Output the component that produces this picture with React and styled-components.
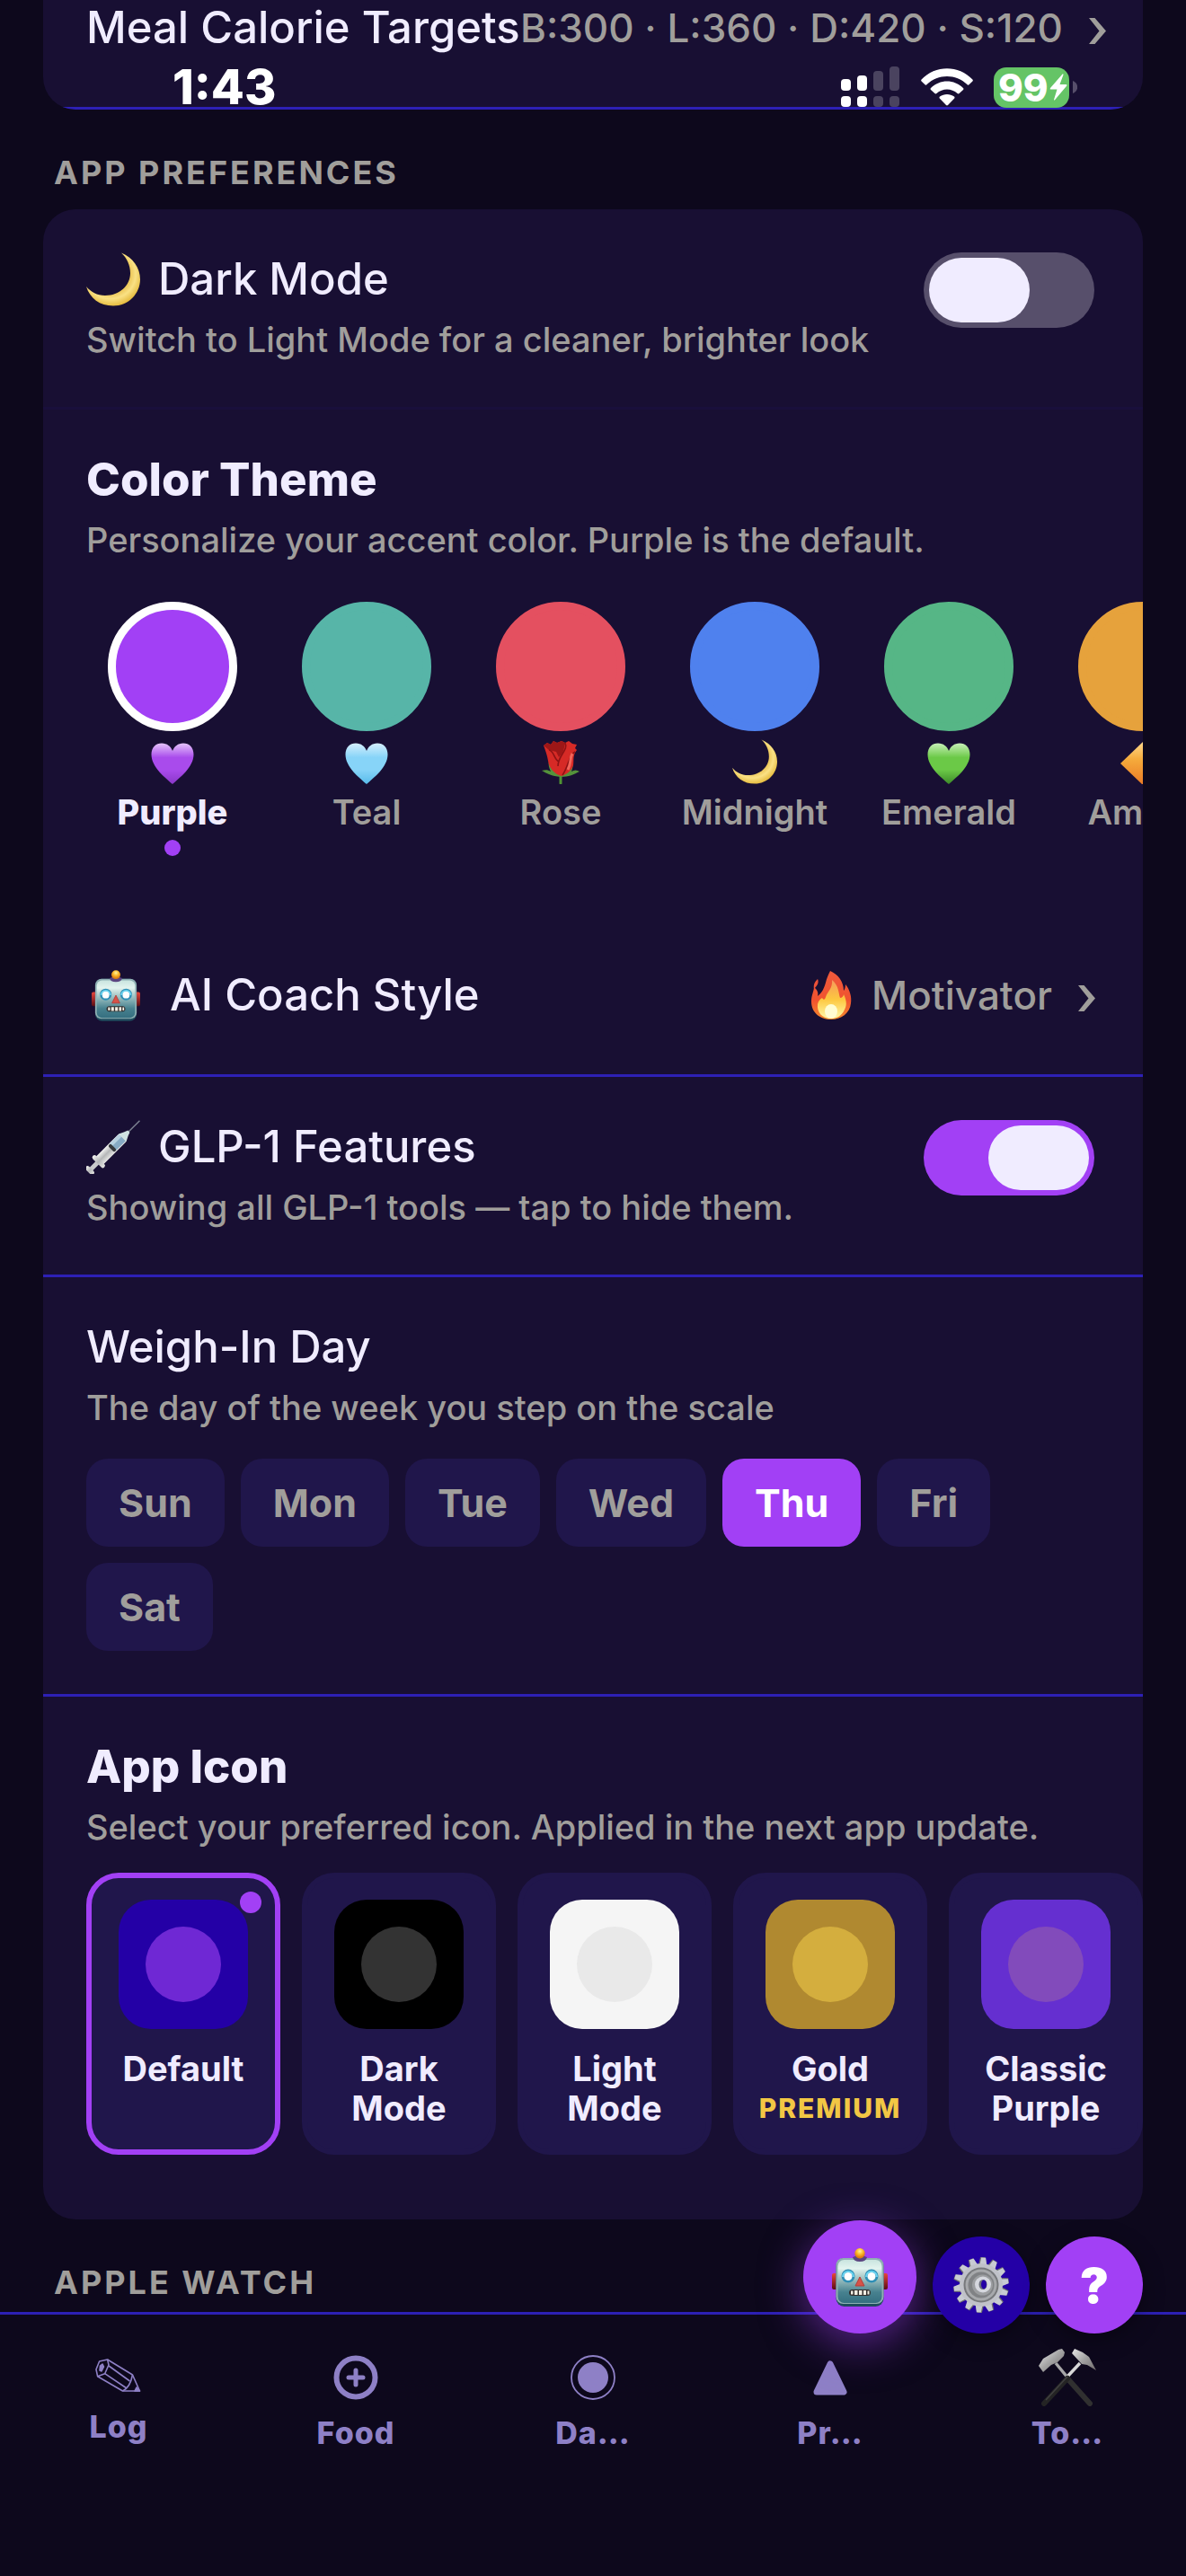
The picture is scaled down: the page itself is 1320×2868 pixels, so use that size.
import styled, { createGlobalStyle } from "styled-components";
import { useState } from "react";

const GlobalStyle = createGlobalStyle`
  * {
    box-sizing: border-box;
  }
  body {
    margin: 0;
    background: #0d081c;
    color: #f0ecff;
    font-family: Inter, "Liberation Sans", sans-serif;
  }
  button {
    border: none;
    padding: 0;
    background: none;
    color: inherit;
    font: inherit;
    cursor: pointer;
  }
  svg {
    display: block;
    flex: none;
  }
`;

const Screen = styled.div`
  position: relative;
  min-height: 100vh;
  display: flex;
  flex-direction: column;
`;

const StatusBar = styled.header`
  position: absolute;
  top: 67px;
  left: 0;
  right: 0;
  height: 60px;
  padding: 0 121px 0 192px;
  display: flex;
  align-items: center;
  justify-content: space-between;
  color: white;
`;

const Time = styled.span`
  font-size: 54px;
  line-height: 60px;
  font-weight: 800;
`;

const StatusIcons = styled.div`
  display: flex;
  align-items: center;
  gap: 23px;
`;

const Battery = styled.div`
  display: flex;
  align-items: center;
  gap: 4px;
`;

const BatteryLevel = styled.span`
  width: 84px;
  height: 45px;
  padding: 0 2px 0 5px;
  border-radius: 14px;
  display: flex;
  align-items: center;
  justify-content: space-between;
  background: #65c466;
  font-size: 42px;
  line-height: 45px;
  font-weight: 800;
`;

const Content = styled.main`
  padding: 0 48px;
`;

const Card = styled.section`
  border-radius: ${(props) => (props.$continued ? "0 0 36px 36px" : "36px")};
  background: #180f33;
  overflow: hidden;
`;

const SectionLabel = styled.h2`
  margin: 48px 12px ${(props) => (props.$last ? "10px" : "18px")};
  color: #a09e9b;
  font-size: 36px;
  line-height: 45px;
  font-weight: 700;
  letter-spacing: 3px;
`;

const LinkRow = styled.button`
  width: 100%;
  padding: ${(props) => (props.$continued ? "1px 39px 58px 48px" : "58px 51px 58px 48px")};
  border-bottom: 3px solid #2d20b5;
  display: flex;
  align-items: center;
  justify-content: space-between;
  white-space: nowrap;
`;

const RowName = styled.span`
  display: flex;
  align-items: center;
  gap: 27px;
  font-size: 49px;
  line-height: 60px;
  font-weight: 500;
`;

const RowIcon = styled.span`
  width: 66px;
  display: flex;
  justify-content: center;
`;

const RowValue = styled.span`
  display: flex;
  align-items: center;
  gap: 22px;
  color: #a09e9b;
  font-size: 44px;
  line-height: 60px;
  font-weight: 500;
`;

const Setting = styled.div`
  padding: 48px;
  border-bottom: ${(props) => (props.$line ? `3px solid ${props.$line}` : "none")};
`;

const SettingHead = styled.div`
  display: flex;
  align-items: flex-start;
  justify-content: space-between;
  padding-right: 6px;
`;

const Title = styled.h3`
  margin: 0;
  display: flex;
  align-items: center;
  gap: 20px;
  font-size: ${(props) => (props.$strong ? 51 : 49)}px;
  line-height: 60px;
  font-weight: ${(props) => (props.$strong ? 800 : 500)};
`;

const Description = styled.p`
  margin: 10px 0 0;
  color: #a09e9b;
  font-size: 38px;
  line-height: 54px;
  font-weight: 500;
`;

const Switch = styled.input`
  appearance: none;
  flex: none;
  margin: 0;
  width: 190px;
  height: 84px;
  padding: 6px;
  border-radius: 42px;
  background: #574f6b;
  display: flex;
  cursor: pointer;

  &::before {
    content: "";
    width: 112px;
    border-radius: 36px;
    background: #f0ecff;
  }

  &:checked {
    background: #a240f5;
    justify-content: flex-end;
  }
`;

const Scroller = styled.div`
  display: flex;
  gap: 24px;
  margin-right: -48px;
  overflow: hidden;
`;

const ThemeList = styled(Scroller)`
  margin-top: 42px;
  padding-bottom: 19px;
`;

const ThemeOption = styled.button`
  flex: none;
  width: 192px;
  display: flex;
  flex-direction: column;
  align-items: center;
  gap: 9px;
  color: ${(props) => (props.$active ? "#f0ecff" : "#a09e9b")};
  font-size: 38px;
  line-height: 44px;
  font-weight: ${(props) => (props.$active ? 800 : 600)};
`;

const Swatch = styled.span`
  width: 144px;
  height: 144px;
  border-radius: 50%;
  border: 9px solid ${(props) => (props.$active ? "white" : props.$color)};
  background: ${(props) => props.$color};
`;

const ActiveDot = styled.span`
  width: 18px;
  height: 18px;
  border-radius: 50%;
  background: ${(props) => (props.$active ? "#a240f5" : "transparent")};
`;

const DayList = styled.div`
  margin-top: 30px;
  display: flex;
  flex-wrap: wrap;
  gap: 18px;
`;

const Day = styled.button`
  padding: 19px 36px;
  border-radius: 24px;
  background: ${(props) => (props.$active ? "#a240f5" : "#20164b")};
  color: ${(props) => (props.$active ? "white" : "#a09e9b")};
  font-size: 43px;
  line-height: 60px;
  font-weight: 700;
`;

const IconList = styled(Scroller)`
  margin-top: 24px;
  padding-bottom: 24px;
`;

const IconOption = styled.button`
  position: relative;
  flex: none;
  width: 216px;
  padding: 24px 16px;
  border: 6px solid ${(props) => (props.$active ? "#a240f5" : "#20164b")};
  border-radius: 36px;
  background: #20164b;
  display: flex;
  flex-direction: column;
  align-items: center;
  font-size: 38px;
  line-height: 44px;
  font-weight: 700;
`;

const IconPreview = styled.span`
  width: 144px;
  height: 144px;
  margin-bottom: 22px;
  border-radius: 36px;
  background: ${(props) => props.$color};
  display: flex;
  align-items: center;
  justify-content: center;

  &::before {
    content: "";
    width: 84px;
    height: 84px;
    border-radius: 50%;
    background: ${(props) => props.$dot};
  }
`;

const SelectedBadge = styled.span`
  position: absolute;
  top: 15px;
  right: 15px;
  width: 24px;
  height: 24px;
  border-radius: 50%;
  background: #a240f5;
`;

const Premium = styled.span`
  color: #f2c744;
  font-size: 30px;
  font-weight: 800;
  letter-spacing: 2px;
`;

const TabBar = styled.nav`
  flex: 1;
  border-top: 3px solid #2d20b5;
  padding: 38px 0 138px;
  display: grid;
  grid-template-columns: repeat(5, 1fr);
`;

const Tab = styled.a`
  display: flex;
  flex-direction: column;
  align-items: center;
  gap: 10px;
  color: #8e80c6;
  font-size: 34px;
  line-height: 40px;
  font-weight: 800;
  letter-spacing: 1px;
  text-decoration: none;
`;

const FabGroup = styled.div`
  position: absolute;
  right: 48px;
  bottom: 270px;
  display: flex;
  align-items: flex-end;
  gap: 18px;
`;

const Fab = styled.button`
  width: ${(props) => (props.$large ? 126 : 108)}px;
  height: ${(props) => (props.$large ? 126 : 108)}px;
  border-radius: 50%;
  background: ${(props) => props.$color};
  box-shadow: ${(props) =>
    props.$large
      ? "0 12px 48px rgba(162, 64, 245, 0.5)"
      : "0 6px 24px rgba(0, 0, 0, 0.35)"};
  display: flex;
  align-items: center;
  justify-content: center;
  color: white;
  font-size: 54px;
  font-weight: 900;
`;

// Status bar icons

const Signal = () => (
  <svg width="66" height="46" viewBox="0 0 66 46" fill="white" aria-hidden="true">
    <rect x="0" y="14" width="11" height="13" rx="4" />
    <rect x="18" y="10" width="11" height="17" rx="4" />
    <rect x="36" y="5" width="11" height="22" rx="4" opacity="0.22" />
    <rect x="54" y="0" width="11" height="27" rx="4" opacity="0.22" />
    <rect x="0" y="33" width="11" height="12" rx="4" />
    <rect x="18" y="33" width="11" height="12" rx="4" />
    <rect x="36" y="33" width="11" height="12" rx="4" opacity="0.22" />
    <rect x="54" y="33" width="11" height="12" rx="4" opacity="0.22" />
  </svg>
);

const Wifi = () => (
  <svg width="58" height="43" viewBox="0 0 58 43" fill="white" aria-hidden="true">
    <path d="M0.6 12.5 C16 -4 42 -4 57.4 12.5 C58 13.2 58 14 57.4 14.6 L53.5 18.2 C52.8 18.8 52 18.8 51.4 18.1 C39 6 19 6 6.6 18.1 C6 18.8 5.2 18.8 4.5 18.2 L0.6 14.6 C0 14 0 13.2 0.6 12.5 Z" />
    <path d="M11 22 C21 12 37 12 47 22 C47.6 22.7 47.6 23.4 47 24 L42.6 28 C42 28.6 41.2 28.6 40.6 28 C34 22 24 22 17.4 28 C16.8 28.6 16 28.6 15.4 28 L11 24 C10.4 23.4 10.4 22.7 11 22 Z" />
    <path d="M21 31.5 C25.5 28 32.5 28 37 31.5 C37.7 32.2 37.7 33 37 33.7 L30 41 C29.4 41.6 28.6 41.6 28 41 L21 33.7 C20.3 33 20.3 32.2 21 31.5 Z" />
  </svg>
);

const Bolt = () => (
  <svg width="20" height="30" viewBox="0 0 20 30" fill="white" aria-hidden="true">
    <path d="M14.5 0.5 L1 16 Q0 17.5 1.5 17.5 H8.5 L5 29 Q5 30 6 29.3 L19.3 13.5 Q20 12 18.5 12 H11.5 L15.5 1.2 Q15.5 0 14.5 0.5 Z" />
  </svg>
);

const BatteryTip = () => (
  <svg width="5" height="14" viewBox="0 0 5 14" aria-hidden="true">
    <path d="M0 0 C7 3 7 11 0 14 Z" fill="#574f6b" />
  </svg>
);

const Chevron = () => (
  <svg width="28" height="36" viewBox="-7 -11 28 36" aria-hidden="true">
    <path d="M0 -4 H6.5 L19 10.5 L6.5 25 H0 L11.5 10.5 Z" fill="#a09e9b" />
  </svg>
);

// Colour pictograms

const Moon = ({ size = 60 }) => (
  <svg width={size} height={size} viewBox="0 0 60 60" aria-hidden="true">
    <defs>
      <radialGradient id="moon" cx="0.45" cy="0.4" r="0.6">
        <stop offset="0.5" stopColor="#e3b53c" />
        <stop offset="0.78" stopColor="#fae184" />
        <stop offset="1" stopColor="#e6bd42" />
      </radialGradient>
    </defs>
    <path
      d="M39 0.5 C52 6 60 17 60 30 C60 46 47 59.5 30 59.5 C15 59.5 4 51 0 38 C5 44 12 48 21 48 C37 48 49 37 49 23 C49 14 45 6 39 0.5 Z"
      fill="url(#moon)"
    />
  </svg>
);

const Heart = ({ name, light, color, dark }) => (
  <svg width="50" height="50" viewBox="0 0 50 50" aria-hidden="true">
    <defs>
      <linearGradient id={`heart-${name}`} x1="0" y1="0" x2="0" y2="1">
        <stop offset="0" stopColor={light} />
        <stop offset="0.35" stopColor={color} />
        <stop offset="0.65" stopColor={color} />
        <stop offset="1" stopColor={dark} />
      </linearGradient>
    </defs>
    <path
      d="M25 50 C17 43 1.5 31 1.5 17 C1.5 9 6.5 4.5 13 4.5 C19 4.5 23 8 25 13 C27 8 31 4.5 37 4.5 C43.5 4.5 48.5 9 48.5 17 C48.5 31 33 43 25 50 Z"
      fill={`url(#heart-${name})`}
    />
  </svg>
);

const Rose = () => (
  <svg width="50" height="50" viewBox="0 0 50 50" aria-hidden="true">
    <path d="M25 36 V49" stroke="#4f9433" strokeWidth="3" strokeLinecap="round" />
    <path d="M25 42 C15 41 9 38 4 35 C8 34 11 34 14 36 C12 32 11 28 12 25 C17 30 22 34 25 40 C30 36 34 31 38 26 C39 30 38 33 37 36 C40 34 43 34 46 36 C40 39 34 42 25 42 Z" fill="#54923b" />
    <path d="M11 24 C10 18 8 12 6 7 L10 4 L14 6 L17 2 L21 4 L26 2 L30 4 L34 2 L38 5 L43 6 L41 10 L43 12 C38 18 40 24 39 29 C37 36 31 39 26 41 C18 39 12 32 11 24 Z" fill="#d62a26" />
    <path d="M6 7 L10 4 L14 6 L17 2 L21 4 L26 2 L30 4 C29 11 28 15 23 20 L20 14 L12 12 Z" fill="#9d1717" />
    <path d="M30 4 C34 12 22 18 22 30 M12 12 C18 13 17 22 23 25 M41 14 C34 18 34 30 27 40" fill="none" stroke="#8d1214" strokeWidth="1.6" />
    <path d="M38 16 C35 21 37 27 33 34" fill="none" stroke="#f2655a" strokeWidth="3" />
  </svg>
);

const Diamond = () => (
  <svg width="50" height="50" viewBox="0 0 50 50" aria-hidden="true">
    <defs>
      <linearGradient id="diamond" x1="0" y1="0" x2="0" y2="1">
        <stop offset="0" stopColor="#ffd98c" />
        <stop offset="0.4" stopColor="#f5ab3c" />
        <stop offset="1" stopColor="#ea7a25" />
      </linearGradient>
    </defs>
    <path d="M25 3 L50 27 L25 51 L0 27 Z" fill="url(#diamond)" />
  </svg>
);

const Robot = ({ size = 54 }) => (
  <svg width={size} height={size + 3} viewBox="0 0 62 65" aria-hidden="true">
    <defs>
      <linearGradient id="robot-face" x1="0" y1="0" x2="0" y2="1">
        <stop offset="0" stopColor="#c9e4df" />
        <stop offset="0.2" stopColor="#e3f4ef" />
        <stop offset="0.4" stopColor="#a9c9c8" />
        <stop offset="0.75" stopColor="#47818f" />
        <stop offset="1" stopColor="#356f80" />
      </linearGradient>
      <radialGradient id="robot-lamp" cx="0.5" cy="0.3" r="0.6">
        <stop offset="0" stopColor="#fff3a0" />
        <stop offset="0.5" stopColor="#fbbd2e" />
        <stop offset="1" stopColor="#dc7c12" />
      </radialGradient>
      <linearGradient id="robot-ear" x1="0" y1="0" x2="0" y2="1">
        <stop offset="0" stopColor="#e8453a" />
        <stop offset="1" stopColor="#5a0d14" />
      </linearGradient>
    </defs>
    <rect x="0" y="28" width="7" height="18" rx="2" fill="url(#robot-ear)" />
    <rect x="55" y="28" width="7" height="18" rx="2" fill="url(#robot-ear)" />
    <rect x="4.5" y="11" width="53" height="54" rx="9" fill="#1f4d5f" />
    <rect x="4.5" y="11" width="53" height="51" rx="8" fill="#8fb0b3" />
    <rect x="6.5" y="13" width="49" height="48" rx="7" fill="url(#robot-face)" />
    <path d="M23 10 Q31 6 39 10 Q38 15 31 15 Q24 15 23 10 Z" fill="#5b4580" />
    <circle cx="31" cy="5.7" r="5.7" fill="url(#robot-lamp)" />
    <circle cx="18" cy="31" r="7.5" fill="#2f8fb6" />
    <circle cx="44" cy="31" r="7.5" fill="#2f8fb6" />
    <path d="M12 32 A6 6 0 0 1 24 32 M38 32 A6 6 0 0 1 50 32" fill="none" stroke="#6bd6f2" strokeWidth="2" />
    <circle cx="18" cy="31.5" r="4.5" fill="white" />
    <circle cx="44" cy="31.5" r="4.5" fill="white" />
    <path d="M31 32 L36 42 H26 Z" fill="#d65348" stroke="#b43c38" strokeLinejoin="round" />
    <rect x="19" y="46" width="24" height="7" rx="3.5" fill="#33302f" />
    <path d="M21 47.5 h2.5 v4 h-2.5 Z M25 47 h3.5 v5 h-3.5 Z M30 47 h3.5 v5 h-3.5 Z M35 47 h3 v5 h-3 Z M39.5 47.5 h2 v4 h-2 Z" fill="#f3efe4" />
  </svg>
);

const Flame = () => (
  <svg width="46" height="54" viewBox="0 0 46 54" aria-hidden="true">
    <defs>
      <linearGradient id="flame" x1="0" y1="0" x2="0" y2="1">
        <stop offset="0" stopColor="#ef5a3c" />
        <stop offset="0.6" stopColor="#f0522f" />
        <stop offset="1" stopColor="#f58a2c" />
      </linearGradient>
      <linearGradient id="flame-core" x1="0" y1="0" x2="0" y2="1">
        <stop offset="0" stopColor="#f59a5c" />
        <stop offset="0.5" stopColor="#fdc73f" />
        <stop offset="1" stopColor="#fff9a8" />
      </linearGradient>
    </defs>
    <path d="M22 0 C31 4 37 12 37 22 C38 21 39 18 39 15 C44 21 46 29 45 36 C44 47 34 54 23 54 C10 54 1 46 1 34 C1 27 4 22 4 18 C8 21 9 25 8 28 C14 23 15 19 17 13 C18 8 20 4 22 0 Z" fill="url(#flame)" />
    <path d="M8 9 C10 13 7 17 4 20 C3 15 5 12 8 9 Z" fill="#ec5138" />
    <path d="M24 10 C32 17 31 24 33 30 C35 30 37 28 37 26 C40 32 41 38 38 43 C35 50 29 53 23 53 C13 53 7 46 8 37 C9 33 11 31 13 30 C15 33 16 32 17 29 C19 23 25 19 24 10 Z" fill="url(#flame-core)" />
    <ellipse cx="23" cy="45" rx="7" ry="8" fill="#fffdd2" />
  </svg>
);

const Syringe = () => (
  <svg width="60" height="60" viewBox="0 0 60 60" aria-hidden="true">
    <defs>
      <linearGradient id="steel" x1="0" y1="0" x2="0" y2="1">
        <stop offset="0" stopColor="#f4f4f2" />
        <stop offset="0.5" stopColor="#b5b7b8" />
        <stop offset="1" stopColor="#e6e6e4" />
      </linearGradient>
    </defs>
    <g transform="translate(0 60) rotate(-45)">
      <rect x="64" y="-0.6" width="20" height="1.4" fill="#7f8594" />
      <rect x="5" y="-2.5" width="14" height="5" fill="#c9cacb" />
      <rect x="3" y="-6" width="5" height="12" rx="2.5" fill="url(#steel)" />
      <rect x="20" y="-6" width="38" height="12" rx="2" fill="url(#steel)" />
      <rect x="42" y="-5" width="15" height="10" fill="#86aac4" />
      <path d="M42 -5.5 h15 v4 h-15 Z" fill="#b7d1e0" />
      <rect x="39" y="-5" width="4" height="10" rx="2" fill="#35383c" />
      <path d="M57 -6 L63 -3 L67 -1.5 V1.5 L63 3 L57 6 Z" fill="#cfe3e2" />
      <rect x="17" y="-9" width="5" height="18" rx="2.5" fill="url(#steel)" />
    </g>
  </svg>
);

const teeth = Array.from({ length: 14 }, (_, i) => (i * 360) / 14 + 5);

const Gear = () => (
  <svg width="62" height="62" viewBox="-31 -31 62 62" aria-hidden="true">
    {teeth.map((angle) => (
      <g key={angle} transform={`rotate(${angle})`}>
        <path d="M-5 -22 L-3.5 -31 H2 L4 -22 Z" fill="#6f7072" />
        <path d="M-3.5 -22 L-2.5 -30.5 H2.5 L4.5 -22 Z" fill="#c8cbd3" />
      </g>
    ))}
    <circle r="24" fill="#c0c2c9" />
    <circle r="19.5" fill="#77797c" />
    <circle r="17.5" fill="#a7a9ac" />
    <circle r="14.5" fill="#808285" />
    <circle cx="1.5" r="11.5" fill="#9b9da0" />
    <circle cx="2" cy="-0.5" r="9" fill="#d5d7de" />
    <ellipse cx="2" cy="-0.5" rx="4.5" ry="5.5" fill="#6b6e7c" />
    <ellipse cx="3" cy="-0.5" rx="3" ry="5" fill="#2400a6" />
  </svg>
);

const HammerPick = () => (
  <svg width="64" height="64" viewBox="0 0 64 64" aria-hidden="true">
    <defs>
      <linearGradient id="head" x1="0" y1="0" x2="1" y2="1">
        <stop offset="0" stopColor="#eeeeee" />
        <stop offset="0.5" stopColor="#a3a3a3" />
        <stop offset="1" stopColor="#6e6a6b" />
      </linearGradient>
    </defs>
    <path d="M19 16 L33 33" stroke="#a7a7a8" strokeWidth="3.5" />
    <path d="M46 16 L31 32" stroke="#d8d8d8" strokeWidth="3.5" />
    <path d="M32 33 L57 61" stroke="#303030" strokeWidth="6" strokeLinecap="round" />
    <path d="M32 33 L6 61" stroke="#242424" strokeWidth="6" strokeLinecap="round" />
    <path d="M32 31 L8 57" stroke="#414141" strokeWidth="1.5" />
    <path d="M22 1 L26 0 L29 4 L28 8 L21 15 L14 18 L5 26 L0 19 L5 11 Z" fill="url(#head)" />
    <path d="M40 0 L49 4 L56 9 L64 24 L54 18 L48 17 L37 5 Z" fill="url(#head)" />
  </svg>
);

// Tab icons

const Pencil = () => (
  <svg width="52" height="57" viewBox="0 -11 52 57" fill="none" stroke="currentColor" strokeWidth="1.6" strokeLinejoin="round" aria-hidden="true">
    <path d="M13.6 1 L4.6 3 L1 12 L2.6 19.7 L10.7 16.7 L15 7 Z" />
    <path d="M13.6 1 L41.5 18 L49.5 36 H30.5 L2.6 19.7 M15 8 L38.5 25 M10.7 16.7 L35 33" />
    <path d="M41.5 18 C40 26 37 33 30.5 36" />
    <path d="M46 32 L49.5 36 H44 Z M8 6 L9.5 9 L7 14 L5 13 L5.5 8 Z" fill="currentColor" />
  </svg>
);

const PlusCircle = () => (
  <svg width="64" height="64" viewBox="-32 -32 64 64" fill="none" stroke="currentColor" strokeWidth="6" strokeLinecap="round" aria-hidden="true">
    <circle r="21.5" />
    <path d="M-8 0 H8 M0 -8 V8" strokeWidth="5" />
  </svg>
);

const FishEye = () => (
  <svg width="64" height="64" viewBox="-32 -32 64 64" aria-hidden="true">
    <circle r="24" fill="none" stroke="currentColor" strokeWidth="1.8" />
    <circle r="17" fill="currentColor" />
  </svg>
);

const Triangle = () => (
  <svg width="64" height="64" viewBox="-32 -32 64 64" aria-hidden="true">
    <path d="M0 -15 L15 16 H-15 Z" fill="currentColor" stroke="currentColor" strokeWidth="7" strokeLinejoin="round" />
  </svg>
);

const themes = [
  { name: "Purple", color: "#a240f5", icon: <Heart name="purple" light="#e5c4fa" color="#a94bec" dark="#8a37c8" /> },
  { name: "Teal", color: "#57b5a8", icon: <Heart name="teal" light="#d5effc" color="#87d4f8" dark="#58bbea" /> },
  { name: "Rose", color: "#e45060", icon: <Rose /> },
  { name: "Midnight", color: "#4f81ee", icon: <Moon size={50} /> },
  { name: "Emerald", color: "#56b686", icon: <Heart name="emerald" light="#c8f0b8" color="#6bc947" dark="#3c8a28" /> },
  { name: "Amber", color: "#e6a23c", icon: <Diamond /> },
];

const days = ["Sun", "Mon", "Tue", "Wed", "Thu", "Fri", "Sat"];

const appIcons = [
  { name: "Default", color: "#2400a6", dot: "#6f28d4" },
  { name: "Dark Mode", color: "#000000", dot: "#333333" },
  { name: "Light Mode", color: "#f5f5f5", dot: "#e9e9e9" },
  { name: "Gold", color: "#b08930", dot: "#d4ae3e", premium: true },
  { name: "Classic Purple", color: "#652fd0", dot: "#824bbb" },
];

const tabs = [
  { name: "Log", icon: <Pencil /> },
  { name: "Food", icon: <PlusCircle /> },
  { name: "Da…", icon: <FishEye /> },
  { name: "Pr…", icon: <Triangle /> },
  { name: "To…", icon: <HammerPick /> },
];

const App = () => {
  const [lightMode, setLightMode] = useState(false);
  const [glp, setGlp] = useState(true);
  const [theme, setTheme] = useState("Purple");
  const [day, setDay] = useState("Thu");
  const [appIcon, setAppIcon] = useState("Default");

  return (
    <Screen>
      <GlobalStyle />
      <Content>
        <Card $continued>
          <LinkRow $continued>
            <RowName>Meal Calorie Targets</RowName>
            <RowValue>
              B:300 · L:360 · D:420 · S:120
              <Chevron />
            </RowValue>
          </LinkRow>
        </Card>

        <SectionLabel>APP PREFERENCES</SectionLabel>
        <Card>
          <Setting $line="#190f3c">
            <SettingHead>
              <div>
                <Title as="label" htmlFor="mode">
                  <Moon />
                  Dark Mode
                </Title>
                <Description>Switch to Light Mode for a cleaner, brighter look</Description>
              </div>
              <Switch
                id="mode"
                type="checkbox"
                checked={lightMode}
                onChange={(e) => setLightMode(e.target.checked)}
              />
            </SettingHead>
          </Setting>

          <Setting>
            <Title $strong>Color Theme</Title>
            <Description>Personalize your accent color. Purple is the default.</Description>
            <ThemeList>
              {themes.map((item) => (
                <ThemeOption
                  key={item.name}
                  $active={item.name === theme}
                  onClick={() => setTheme(item.name)}
                >
                  <Swatch $color={item.color} $active={item.name === theme} />
                  {item.icon}
                  {item.name}
                  <ActiveDot $active={item.name === theme} />
                </ThemeOption>
              ))}
            </ThemeList>
          </Setting>

          <LinkRow>
            <RowName>
              <RowIcon>
                <Robot />
              </RowIcon>
              AI Coach Style
            </RowName>
            <RowValue>
              <Flame />
              Motivator
              <Chevron />
            </RowValue>
          </LinkRow>

          <Setting $line="#2d20b5">
            <SettingHead>
              <div>
                <Title as="label" htmlFor="glp">
                  <Syringe />
                  GLP-1 Features
                </Title>
                <Description>Showing all GLP-1 tools — tap to hide them.</Description>
              </div>
              <Switch
                id="glp"
                type="checkbox"
                checked={glp}
                onChange={(e) => setGlp(e.target.checked)}
              />
            </SettingHead>
          </Setting>

          <Setting $line="#2d20b5">
            <Title>Weigh-In Day</Title>
            <Description>The day of the week you step on the scale</Description>
            <DayList>
              {days.map((name) => (
                <Day key={name} $active={name === day} onClick={() => setDay(name)}>
                  {name}
                </Day>
              ))}
            </DayList>
          </Setting>

          <Setting>
            <Title $strong>App Icon</Title>
            <Description>Select your preferred icon. Applied in the next app update.</Description>
            <IconList>
              {appIcons.map((item) => (
                <IconOption
                  key={item.name}
                  $active={item.name === appIcon}
                  onClick={() => setAppIcon(item.name)}
                >
                  <IconPreview $color={item.color} $dot={item.dot} />
                  {item.name}
                  {item.premium && <Premium>PREMIUM</Premium>}
                  {item.name === appIcon && <SelectedBadge />}
                </IconOption>
              ))}
            </IconList>
          </Setting>
        </Card>

        <SectionLabel $last>APPLE WATCH</SectionLabel>
      </Content>

      <TabBar>
        {tabs.map((tab) => (
          <Tab key={tab.name} href="#">
            {tab.icon}
            {tab.name}
          </Tab>
        ))}
      </TabBar>

      <FabGroup>
        <Fab $large $color="#a240f5" aria-label="AI coach">
          <Robot size={62} />
        </Fab>
        <Fab $color="#2400a6" aria-label="Settings">
          <Gear />
        </Fab>
        <Fab $color="#a240f5">?</Fab>
      </FabGroup>

      <StatusBar>
        <Time>1:43</Time>
        <StatusIcons>
          <Signal />
          <Wifi />
          <Battery>
            <BatteryLevel>
              99
              <Bolt />
            </BatteryLevel>
            <BatteryTip />
          </Battery>
        </StatusIcons>
      </StatusBar>
    </Screen>
  );
};

export default App;
